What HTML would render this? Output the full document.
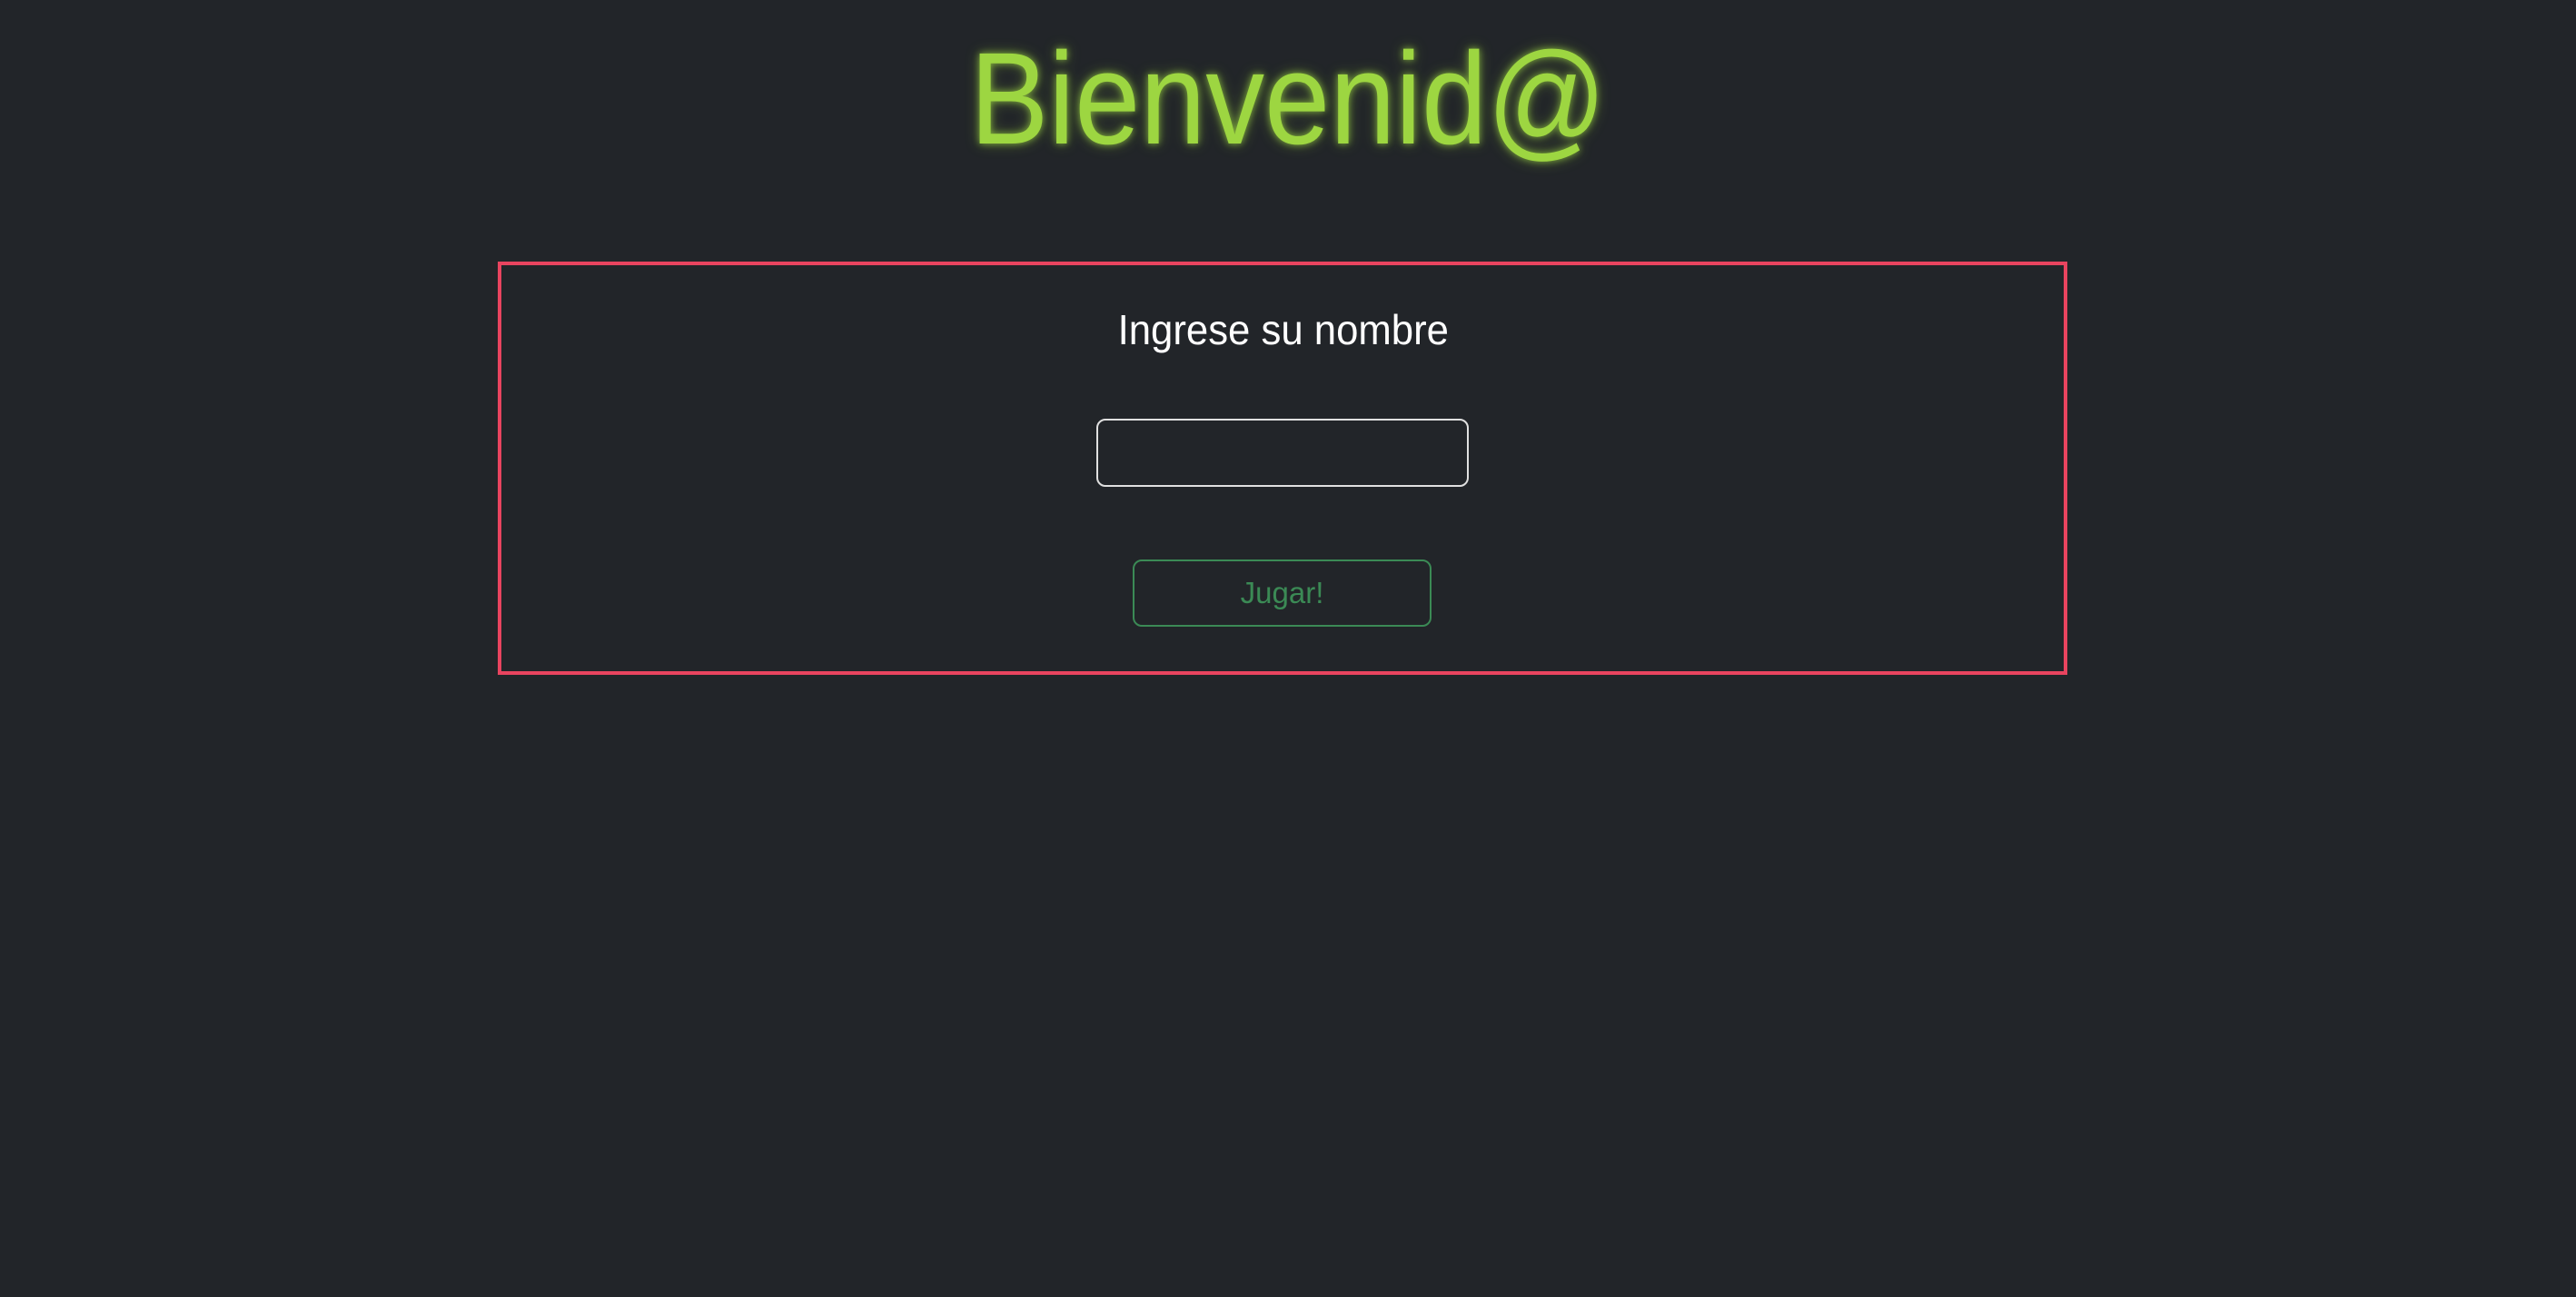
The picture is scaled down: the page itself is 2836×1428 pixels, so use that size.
<!DOCTYPE html>
<html><head><meta charset="utf-8">
<style>
html,body{margin:0;padding:0;}
body{width:2836px;height:1428px;background:#222529;position:relative;overflow:hidden;font-family:"Liberation Sans",sans-serif;}
.t{position:absolute;left:0;width:2836px;text-align:center;}
#title{top:24px;font-size:144px;line-height:170px;color:#9dd641;text-shadow:0 0 8px rgba(157,214,65,.7),0 0 16px rgba(157,214,65,.4);}
#title span{display:inline-block;transform:scaleX(0.9);}
#box{position:absolute;left:548px;top:288px;width:1720px;height:447px;border:4px solid #e9445f;}
#h{top:336px;left:-5px;font-size:46px;line-height:54px;color:#fff;}
#h span{display:inline-block;transform:scaleX(0.95);}
#inp{position:absolute;left:1207px;top:461px;width:406px;height:71px;border:2px solid #e0e0e0;border-radius:10px;}
#btn{position:absolute;left:1247px;top:616px;width:325px;height:70px;border:2px solid #3b8a55;border-radius:10px;color:#3b8a55;font-size:33px;line-height:70px;text-align:center;}
</style></head><body>
<div class="t" id="title"><span>Bienvenid@</span></div>
<div id="box"></div>
<div class="t" id="h"><span>Ingrese su nombre</span></div>
<div id="inp"></div>
<div id="btn">Jugar!</div>
</body></html>
